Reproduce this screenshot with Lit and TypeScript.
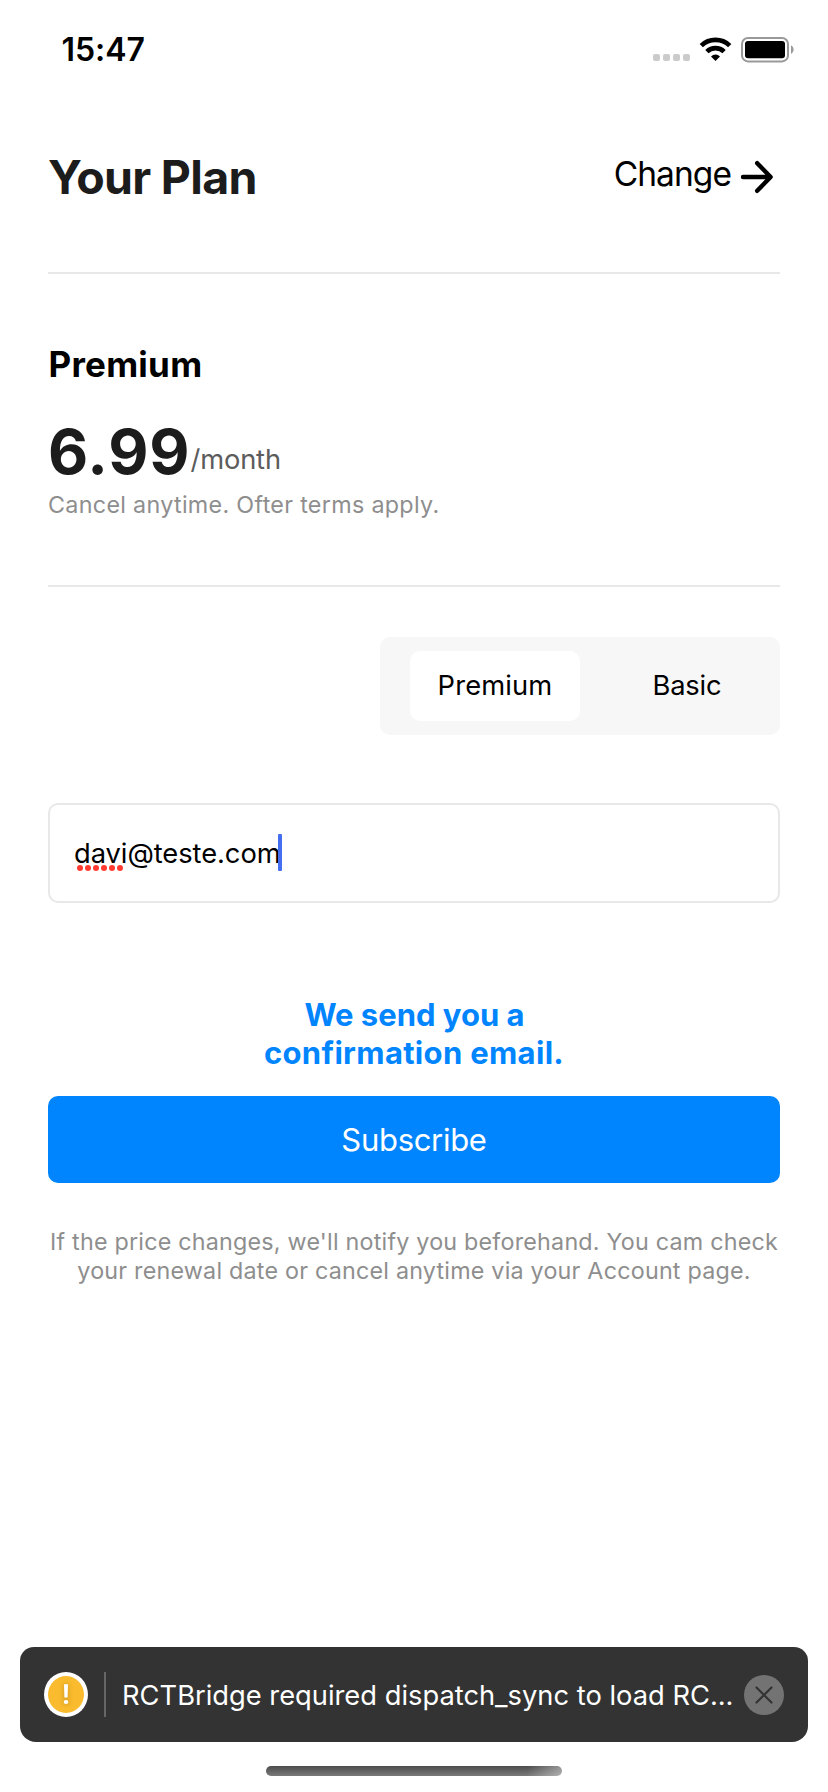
import { LitElement, html, css } from "lit";
import { customElement, state } from "lit/decorators.js";
import { classMap } from "lit/directives/class-map.js";

@customElement("status-bar")
class StatusBar extends LitElement {
  static styles = css`
    :host {
      display: flex;
      align-items: center;
      justify-content: space-between;
      box-sizing: border-box;
      height: 99px;
      padding: 0 32px 0 61.5px;
      color: #000;
    }
    .time { font-size: 32px; font-weight: 600; line-height: 40px; letter-spacing: -0.04px; }
    svg { display: block; }
  `;
  render() {
    return html`
      <span class="time">15:47</span>
      <svg width="144" height="27" viewBox="652 36 144 27">
        <g fill="#cbcbcb">
          <rect x="653" y="54" width="7" height="7" rx="2" />
          <rect x="663" y="54" width="7" height="7" rx="2" />
          <rect x="673" y="54" width="7" height="7" rx="2" />
          <rect x="683" y="54" width="7" height="7" rx="2" />
        </g>
        <g fill="none" stroke="#000" stroke-width="4.7">
          <path d="M701.3 45.6A20.4 20.4 0 0 1 729.7 45.6" />
          <path d="M706.9 51.6A12.4 12.4 0 0 1 724.1 51.6" />
        </g>
        <path d="M715.5 61L711 56.4A6.3 6.3 0 0 1 720 56.4Z" fill="#000" />
        <rect x="742" y="38" width="46" height="23.4" rx="6" fill="none" stroke="#999" stroke-width="2" />
        <rect x="745" y="41" width="40" height="17.2" rx="3" fill="#000" />
        <path d="M791 45.3A4.8 4.8 0 0 1 791 53.9Z" fill="#999" />
      </svg>
    `;
  }
}

@customElement("plan-switch")
class PlanSwitch extends LitElement {
  @state() private selected = "Premium";
  static styles = css`
    :host {
      display: flex;
      align-items: center;
      gap: 44px;
      box-sizing: border-box;
      width: 400px;
      height: 98px;
      padding: 0 30px;
      border-radius: 10px;
      background: #f7f7f7;
    }
    .tab {
      box-sizing: border-box;
      height: 70px;
      padding: 0;
      border: 0;
      border-radius: 10px;
      background: none;
      font: 400 27.3px/70px Inter, sans-serif;
      color: #000;
      text-align: center;
    }
    .tab.first { flex: 0 0 170px; letter-spacing: 0.15px; }
    .tab.last { flex: 0 0 126px; letter-spacing: -0.18px; }
    .tab.active { background: #fff; }
  `;
  render() {
    return html`${["Premium", "Basic"].map(
      (name, i) => html`<button
        class=${classMap({ tab: true, first: i === 0, last: i === 1, active: name === this.selected })}
        @click=${() => (this.selected = name)}
      >${name}</button>`
    )}`;
  }
}

@customElement("warning-toast")
class WarningToast extends LitElement {
  static styles = css`
    :host {
      display: flex;
      align-items: center;
      box-sizing: border-box;
      height: 95px;
      margin: 0 20px;
      padding: 0 24px;
      border-radius: 14px 14px 16px 16px;
      background: #333;
      color: #fff;
    }
    svg { display: block; flex: none; }
    .rule { flex: none; width: 2px; height: 45px; margin: 0 16px; background: #666; }
    .message {
      flex: 1;
      min-width: 0;
      padding-top: 2px;
      white-space: nowrap;
      font-size: 27.3px;
      line-height: 36px;
    }
  `;
  render() {
    return html`
      <svg width="44" height="45" viewBox="0 0 44 45">
        <defs>
          <filter id="soft" x="-200%" y="-50%" width="500%" height="200%"><feGaussianBlur stdDeviation="2.4" /></filter>
        </defs>
        <ellipse cx="22" cy="22.5" rx="22" ry="22.5" fill="#fff" />
        <ellipse cx="22" cy="22.5" rx="18" ry="18.5" fill="#fabb2e" />
        <g fill="#a87a12" opacity="0.5" filter="url(#soft)">
          <rect x="19.5" y="12" width="5" height="14" /><circle cx="22" cy="30" r="3" />
        </g>
        <path d="M20 12.2H24L23.6 25.6H20.4Z" fill="#fff" />
        <ellipse cx="22" cy="30" rx="2.3" ry="2" fill="#fff" />
      </svg>
      <span class="rule"></span>
      <span class="message">RCTBridge required dispatch_sync to load RC...</span>
      <svg width="40" height="40" viewBox="0 0 40 40">
        <circle cx="20" cy="20" r="20" fill="#737373" />
        <path d="M12.5 12.5L27.5 27.5M27.5 12.5L12.5 27.5" stroke="#333" stroke-width="2.2" stroke-linecap="round" />
      </svg>
    `;
  }
}

@customElement("app-root")
class AppRoot extends LitElement {
  static styles = css`
    :host {
      display: flex;
      flex-direction: column;
      box-sizing: border-box;
      height: 1792px;
      background: #fff;
      color: #000;
      font-family: Inter, sans-serif;
      font-weight: 400;
    }
    main { display: flex; flex-direction: column; padding: 0 48px; }
    h1, h2, p { margin: 0; }
    .header { display: flex; align-items: center; justify-content: space-between; height: 156px; }
    h1 { font-size: 46.5px; font-weight: 700; line-height: 56px; letter-spacing: -0.69px; color: #1c1c1c; }
    .change { display: flex; align-items: center; gap: 9px; margin-right: 6px; }
    .change span { padding-bottom: 7px; font-size: 33.5px; line-height: 42px; letter-spacing: -0.95px; }
    .change svg { display: block; }
    .divider { height: 2px; background: #e8e8e8; }
    .divider.top { margin-top: 17px; }
    .divider.mid { margin-top: 65px; }
    h2 { margin-top: 69px; padding-left: 0.5px; font-size: 35px; font-weight: 700; line-height: 42px; letter-spacing: 0.25px; }
    .price { display: flex; align-items: flex-end; margin-top: 29px; }
    .amount { font-size: 62px; font-weight: 700; line-height: 76px; letter-spacing: 0.9px; color: #1c1c1c; }
    .period { font-size: 27.3px; line-height: 60px; letter-spacing: -0.15px; color: #5c5c5c; }
    .terms { margin-top: -1px; font-size: 23.3px; line-height: 31px; letter-spacing: 0.31px; color: #8e8e8e; }
    plan-switch { align-self: flex-end; margin-top: 50px; }
    .field {
      display: flex;
      align-items: center;
      box-sizing: border-box;
      height: 100px;
      margin-top: 68px;
      padding: 0 24px;
      border: 2px solid #e8e8e8;
      border-radius: 10px;
    }
    .value { position: relative; font-size: 27.3px; line-height: 37px; letter-spacing: -0.05px; }
    .dots { position: absolute; left: 2px; top: 29px; }
    .caret { position: absolute; right: -1.5px; top: -0.5px; width: 4px; height: 37px; border-radius: 1px; background: #456def; }
    .note { margin-top: 93px; font-size: 31px; font-weight: 700; line-height: 38px; text-align: center; color: #0085ff; }
    .note span { display: block; }
    .note .first { padding-left: 1px; }
    .note .second { letter-spacing: 0.32px; }
    .subscribe {
      height: 87px;
      margin-top: 24px;
      padding: 0;
      border: 0;
      border-radius: 10px;
      background: #0085ff;
      color: #fff;
      font: 400 31px/87px Inter, sans-serif;
      letter-spacing: -0.3px;
    }
    .fine { margin-top: 44px; font-size: 23.3px; line-height: 29px; letter-spacing: 0.215px; text-align: center; white-space: nowrap; color: #8e8e8e; }
    .spacer { flex: 1; }
    .home {
      flex: none;
      align-self: center;
      width: 296px;
      height: 10px;
      margin: 24px 0 16px;
      border-radius: 5px;
      background: linear-gradient(100deg, transparent 88%, rgba(255, 255, 255, 0.42) 100%), linear-gradient(#4c4c4c, #7a7a7a);
    }
  `;
  render() {
    return html`
      <status-bar></status-bar>
      <main>
        <div class="header">
          <h1>Your Plan</h1>
          <div class="change">
            <span>Change</span>
            <svg width="34" height="34" viewBox="0 0 34 34" fill="none" stroke="#000" stroke-width="4.4" stroke-linecap="round" stroke-linejoin="round">
              <path d="M3 17H30M17.2 3.2L30.6 17L17.2 30.8" />
            </svg>
          </div>
        </div>
        <div class="divider top"></div>
        <h2>Premium</h2>
        <div class="price"><span class="amount">6.99</span><span class="period">/month</span></div>
        <p class="terms">Cancel anytime. Ofter terms apply.</p>
        <div class="divider mid"></div>
        <plan-switch></plan-switch>
        <div class="field">
          <span class="value">davi@teste.com<svg class="dots" width="48" height="8" viewBox="0 0 48 8">
              <path d="M4 4H44.1" stroke="#ff3b30" stroke-width="6" stroke-linecap="round" stroke-dasharray="0 8" /></svg><i class="caret"></i></span>
        </div>
        <p class="note"><span class="first">We send you a</span><span class="second">confirmation email.</span></p>
        <button class="subscribe">Subscribe</button>
        <p class="fine">If the price changes, we'll notify you beforehand. You cam check<br />your renewal date or cancel anytime via your Account page.</p>
      </main>
      <div class="spacer"></div>
      <warning-toast></warning-toast>
      <div class="home"></div>
    `;
  }
}
